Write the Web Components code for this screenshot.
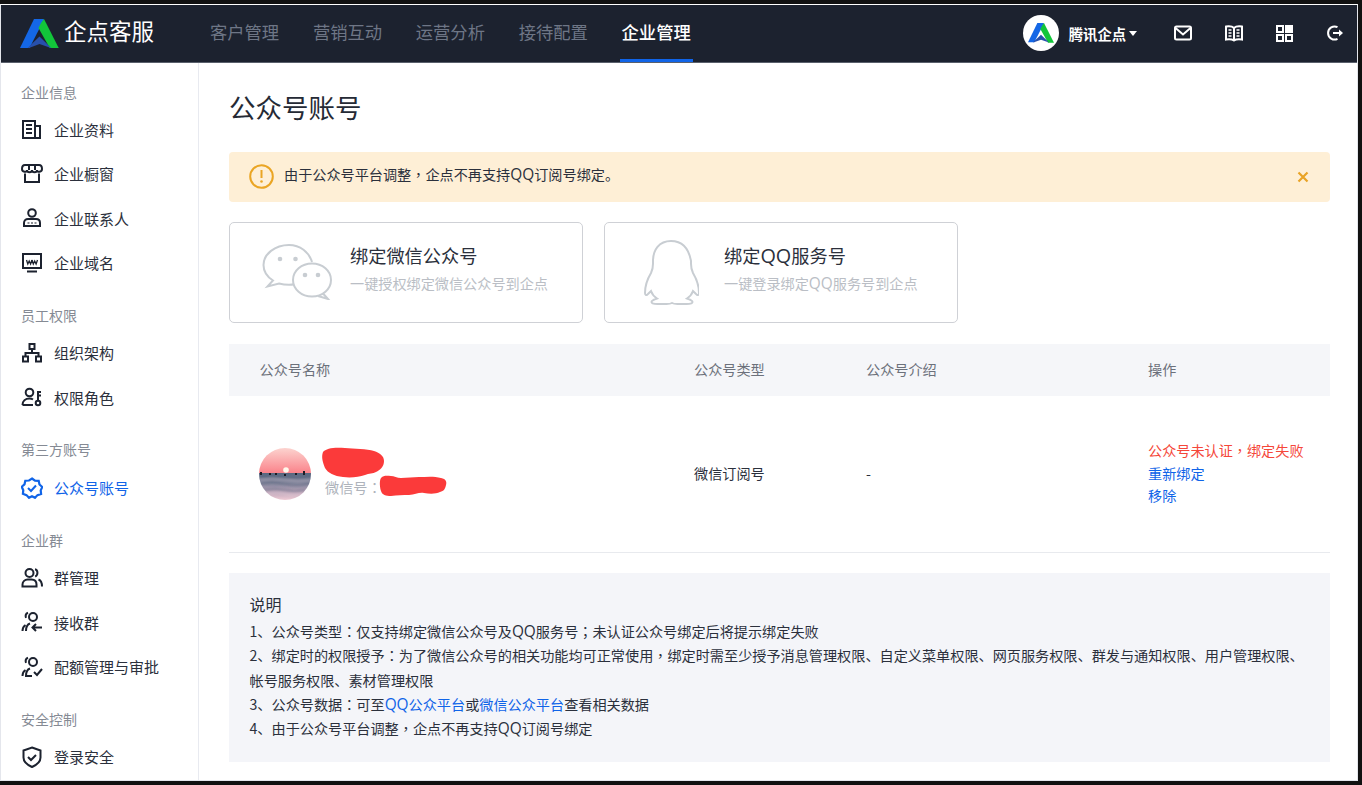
<!DOCTYPE html>
<html lang="zh-CN"><head><meta charset="utf-8"><title>公众号账号</title>
<style>
html,body{margin:0;height:100%;background:#111;overflow:hidden;font-family:"Noto Sans CJK SC","Liberation Sans",sans-serif}
</style></head><body>
<qd-app>
  <qd-topbar slot="top"></qd-topbar>
  <qd-sidebar slot="side">
    <qd-side-group label="企业信息">
      <qd-side-item icon="doc">企业资料</qd-side-item>
      <qd-side-item icon="store">企业橱窗</qd-side-item>
      <qd-side-item icon="contact">企业联系人</qd-side-item>
      <qd-side-item icon="domain">企业域名</qd-side-item>
    </qd-side-group>
    <qd-side-group label="员工权限">
      <qd-side-item icon="org">组织架构</qd-side-item>
      <qd-side-item icon="role">权限角色</qd-side-item>
    </qd-side-group>
    <qd-side-group label="第三方账号">
      <qd-side-item icon="badge" active>公众号账号</qd-side-item>
    </qd-side-group>
    <qd-side-group label="企业群">
      <qd-side-item icon="group">群管理</qd-side-item>
      <qd-side-item icon="receive">接收群</qd-side-item>
      <qd-side-item icon="approve">配额管理与审批</qd-side-item>
    </qd-side-group>
    <qd-side-group label="安全控制">
      <qd-side-item icon="shield">登录安全</qd-side-item>
    </qd-side-group>
  </qd-sidebar>
  <qd-main slot="main">
    <qd-alert class="fx">由于公众号平台调整，企点不再支持QQ订阅号绑定。</qd-alert>
    <qd-bind-row>
      <qd-bind-card kind="wechat" heading="绑定微信公众号" sub="一键授权绑定微信公众号到企点"></qd-bind-card>
      <qd-bind-card kind="qq" heading="绑定QQ服务号" sub="一键登录绑定QQ服务号到企点"></qd-bind-card>
    </qd-bind-row>
    <qd-table></qd-table>
    <qd-note>
      <span slot="title">说明</span>
      <div class="fx">1、公众号类型：仅支持绑定微信公众号及QQ服务号；未认证公众号绑定后将提示绑定失败</div>
      <div class="fx">2、绑定时的权限授予：为了微信公众号的相关功能均可正常使用，绑定时需至少授予消息管理权限、自定义菜单权限、网页服务权限、群发与通知权限、用户管理权限、<br>帐号服务权限、素材管理权限</div>
      <div class="fx">3、公众号数据：可至<a>QQ公众平台</a>或<a>微信公众平台</a>查看相关数据</div>
      <div class="fx">4、由于公众号平台调整，企点不再支持QQ订阅号绑定</div>
    </qd-note>
  </qd-main>
</qd-app>
<script>
const fx=s=>s.replace(/[，：；]/g,m=>`<span lang="zh-TW" style="font-family:'Noto Sans CJK TC',sans-serif">${m}</span>`).replace(/QQ/g,`<span style="font-family:'Open Sans',sans-serif;font-size:1.09em;line-height:1">QQ</span>`);
document.querySelectorAll('.fx').forEach(el=>{el.innerHTML=fx(el.innerHTML)});
document.querySelectorAll('qd-note a').forEach(a=>a.style.color='#1064e8');
const mark=(size)=>`<svg width="${size}" height="${size*29.5/39}" viewBox="0 0 39 29.5" style="display:block;flex:none"><path fill="#1467e6" d="M0 29 14 0h10l-2 4.5L9.500 29H0Z"/><path fill="#12c53a" d="M24 0 39 29.500h-9L18.500 9 21 4l3-4Z"/><path fill="#2750ab" d="M7.500 29 19.500 17.500 31.500 29.200 19.500 25 9 29H7.500Z"/></svg>`;
const I={
doc:'<path d="M2 2h12v17H2zM14 7h5v12h-5"/><path d="M5 6h6M5 10h6M5 14h6"/>',
store:'<path d="M4 2h14c2 0 3 2 3 4 0 3-5 4-5 1 0 3-5 3-5 0 0 3-5 3-5 0 0 3-5 2-5-1 0-2 1-4 3-4Z"/><path d="M8 2v5M14 2v5M4 10.500v8.500h14v-8.500"/>',
contact:'<circle cx="11" cy="6" r="3.800"/><path d="M3 19v-3c0-2.500 2-4 4-4h8c2.500 0 4 1.500 4 4v3H3Z"/><path d="M7.500 15.500v1M11 15.500v1M14.500 15.500v1"/>',
domain:'<path d="M2 2h18v14H2zM6 19.500h10"/><path d="M5.500 8l1.300 4 1.400-3 1.400 3 1.400-4M11 8l1.300 4 1.400-3 1.400 3 1.400-4" stroke-width="1.300"/>',
org:'<path d="M8.500 2h5v5h-5zM2 14.500h5v5H2zM15 14.500h5v5h-5z"/><path d="M11 7v4M4.500 14.500V11h13v3.500"/>',
role:'<circle cx="8.500" cy="6.500" r="3.800"/><path d="M1.500 19c0-4 3-6.500 7-6.500 1.500 0 2.500.3 3.500 1M1.500 19H12"/><circle cx="17" cy="17" r="2.300"/><path d="M17 14.700V6h3M17 9.500h3"/>',
badge:'<path d="M11 1.500l3 2.200 3.700.2.800 3.600 2.800 2.500-1.600 3.400.4 3.600-3.600 1.100-2.500 2.700-3-1.600-3 1.600-2.500-2.700L1.900 16.800 2.300 13.200.7 9.800 3.500 7.300 4.300 3.700 8 3.500Z" stroke-width="2.200"/><path d="M7 11l3 3 5-5.500"/>',
group:'<circle cx="8.500" cy="6" r="4"/><path d="M1.500 19.500v-2c0-3 2.500-5 5-5h4c3 0 5 2 5 5v2h-14Z"/><path d="M14 2.200c2.800.5 3.600 5.500.2 7.500M17.500 12.500c2.500 1 3.500 3 3.500 7"/>',
receive:'<circle cx="12" cy="6" r="4"/><path d="M1.500 20c0-2 0-4 3-6M9 12.500c-3 1-4 4-4 7.500M7 1.800c-2 .8-2.700 3-2 5"/><path d="M21 16.500h-9M15 13l-3.500 3.500L15 20"/>',
approve:'<circle cx="12" cy="6" r="4"/><path d="M1.500 20c0-2 0-4 3-6M9 12.500c-3 1-4 4-4 7.500h6M7 1.800c-2 .8-2.700 3-2 5"/><path d="M13 16l3 3 5-6"/>',
shield:'<path d="M11 1.500 19.500 4.500v7c0 4.500-4 7.500-8.500 9.500-4.500-2-8.500-5-8.500-9.500v-7L11 1.500Z"/><path d="M7 11l3 3 5-5"/>'
};
function def(name,css,html,extra){
  customElements.define(name,class extends HTMLElement{
    connectedCallback(){
      if(this.shadowRoot)return;
      const r=this.attachShadow({mode:'open'});
      r.innerHTML=`<style>${css}</style>`+(typeof html==='function'?html(this):html);
      if(extra)extra(r,this);
    }
  });
}
def('qd-app',`:host{position:fixed;left:0;top:4px;width:1358px;height:777px;box-sizing:border-box;border:1px solid #e4e6ec;border-top-color:#fff;background:#fff;display:flex;flex-direction:column;overflow:hidden}
.b{flex:1;display:flex;min-height:0}`,
`<slot name="top"></slot><div class="b"><slot name="side"></slot><slot name="main"></slot></div>`);

const navNames=['客户管理','营销互动','运营分析','接待配置','企业管理'];
def('qd-topbar',`:host{flex:none;height:56.500px;background:#1c222f;display:flex;align-items:stretch;color:#fff;border-bottom:1px solid #5a606c}
.logo{display:flex;align-items:center;gap:5px;margin-left:19px;width:186px;flex:none}
.logo span{font-size:22.500px;line-height:30px;white-space:nowrap;margin-bottom:6px}
nav{display:flex;gap:29.750px;margin-left:2px}
nav a{display:flex;align-items:center;padding:0 2px;font-size:17.300px;color:#6e7686;box-sizing:border-box;border-bottom:3px solid transparent;white-space:nowrap}
nav a.on{color:#fff;border-bottom-color:#1064e8;font-weight:500}
.r{margin-left:auto;display:flex;align-items:center}
.av{width:36px;height:36px;border-radius:50%;background:#fff;display:flex;align-items:center;justify-content:center;margin-right:10px}
.nm{font-size:14.300px;font-weight:700;white-space:nowrap}
.car{width:0;height:0;border:4.500px solid transparent;border-top:5px solid #fff;border-bottom:0;margin-left:3px;margin-right:37px}
svg.i{display:block;fill:none;stroke:#fff;stroke-width:2}
.r svg.i+svg.i{margin-left:33px}`,
`<div class="logo">${mark(39)}<span>企点客服</span></div>
<nav>${navNames.map((n,i)=>`<a class="${i==4?'on':''}">${n}</a>`).join('')}</nav>
<div class="r"><div class="av">${mark(26)}</div><span class="nm">腾讯企点</span><i class="car"></i>
<svg class="i" width="18" height="18" viewBox="0 0 18 18"><rect x="1" y="2.500" width="16" height="13" rx="1.500"/><path d="M1.500 4 9 10.500 16.500 4"/></svg>
<svg class="i" width="18" height="18" viewBox="0 0 18 18"><path d="M9 4C7.500 2.500 4 2 1 2.500v13C4 15 7.500 15.500 9 16.500c1.500-1 5-1.500 8-1v-13C14 2 10.500 2.500 9 4ZM9 4v12.500"/><path d="M3.500 6h3M3.500 9h3M3.500 12h3M11.500 6h3M11.500 9h3M11.500 12h3" stroke-width="1.300"/></svg>
<svg class="i" width="17" height="17" viewBox="0 0 17 17" style="margin-right:33px"><rect x="1" y="1" width="6" height="6"/><rect x="10" y="0" width="7" height="7" fill="#fff"/><rect x="1" y="10" width="6" height="6"/><rect x="10" y="10" width="6" height="6"/></svg>
<svg class="i" width="18" height="18" viewBox="0 0 18 18" style="margin:0 13px 0 0"><path d="M11.500 3.200A6.500 6.500 0 1 0 11.500 14.800"/><path d="M7 9h8"/><path d="M13 5.500 17 9l-4 3.500Z" fill="#fff" stroke="none"/></svg></div>`);

def('qd-sidebar',`:host{flex:none;width:198px;box-sizing:border-box;border-right:1px solid #e8eaf0;padding-top:14px;overflow:hidden;display:block}`,`<slot></slot>`);
def('qd-side-group',`:host{display:block;margin-bottom:15px}
.l{height:31px;line-height:31px;padding-left:20px;font-size:14px;color:#858a94;white-space:nowrap}`,
h=>`<div class="l">${h.getAttribute('label')}</div><slot></slot>`);
def('qd-side-item',`:host{display:flex;align-items:center;height:44.330px;padding-left:20px;font-size:15px;color:#2b303c;white-space:nowrap}
:host([active]){color:#1064e8}
svg{flex:none;width:22px;height:22px;margin-right:11px;fill:none;stroke:currentColor;stroke-width:2}
:host(:not([active])) svg{color:#1c222f}`,
h=>`<svg viewBox="0 0 22 22">${I[h.getAttribute('icon')]}</svg><slot></slot>`);

def('qd-main',`:host{flex:1;min-width:0;display:block;padding:0 27px 0 30px;color:#2b303c}
h1{margin:0;font-size:26.500px;font-weight:400;line-height:38px;padding-top:25px;height:89px;box-sizing:border-box;color:#252a35}`,
`<h1>公众号账号</h1><slot></slot>`);

def('qd-alert',`:host{display:flex;align-items:center;height:50px;background:#feefd6;border-radius:4px;padding:0 21px 0 20px;font-size:14.150px;color:#2b303c;white-space:nowrap}
svg{flex:none;margin-right:10px}.x{margin:0 0 0 auto}.tx{padding-bottom:5px}`,
`<svg width="25" height="25" viewBox="0 0 25 25"><circle cx="12.500" cy="12.500" r="11.300" fill="none" stroke="#eaa524" stroke-width="2"/><path d="M12.500 6v8" stroke="#eaa524" stroke-width="2"/><circle cx="12.500" cy="17.500" r="1.300" fill="#eaa524"/></svg>
<span class="tx"><slot></slot></span>
<svg class="x" width="12" height="12" viewBox="0 0 12 12"><path d="M1.500 1.500l9 9M10.500 1.500l-9 9" stroke="#e9a326" stroke-width="2.200"/></svg>`);

def('qd-bind-row',`:host{display:flex;gap:21px;margin-top:20.500px}`,`<slot></slot>`);
const cardIcons={
wechat:`<svg width="70" height="56" viewBox="0 0 70 56" fill="none" stroke="#c8cdd2" stroke-width="2"><path d="M27 1C13 1 1.500 10 1.500 21c0 6.500 4 12 9.500 15.500L5.500 42.500l11.500-3c3 .8 6 1.300 10 1.300 2 0 4-.2 5.500-.5"/><path d="M50 18C47 8 38 1 27 1"/><ellipse cx="50" cy="36" rx="19" ry="16.500" fill="#fff"/><path d="M61 49.500 66 55 56 52"/><g fill="#c8cdd2" stroke="none"><circle cx="18" cy="15" r="2.300"/><circle cx="33.500" cy="15" r="2.300"/><circle cx="43" cy="31" r="2.300"/><circle cx="56" cy="31" r="2.300"/></g></svg>`,
qq:`<svg width="56" height="65" viewBox="0 0 56 65" fill="none" stroke="#c8cdd2" stroke-width="2"><path d="M28 1C16 1 10 10 10 21c0 5 .5 7-2 12-3 5-6 13-6 20 0 2 1.500 3 3 1l3-3c1 3 3 5.500 6 7.500-3 1-5.500 2-5.500 3.500 0 2 3 2 6 2h9c3 0 5-.7 5.500-1 .5.300 2.500 1 5.500 1h9c3 0 6 0 6-2 0-1.500-2.500-2.500-5.500-3.500 3-2 5-4.500 6-7.500l3 3c1.500 2 3 1 3-1 0-7-3-15-6-20-2.500-5-2-7-2-12C46 10 40 1 28 1Z"/></svg>`};
def('qd-bind-card',`:host{display:flex;width:354px;height:101px;box-sizing:border-box;border:1px solid #cfd1d6;border-radius:5px;background:#fff;align-items:center;white-space:nowrap}
.ic{flex:none;width:120px;box-sizing:border-box;padding-left:32px;margin-top:-2px}
:host([kind=qq]) .ic{width:119px;padding-left:38px;margin-top:0}
.ic svg{display:block}
.h{font-size:18.200px;line-height:26px;color:#2b303c}
.s{font-size:14.150px;line-height:20px;color:#babec5;margin-top:5px}
.t{margin-top:-11px}`,
h=>`<div class="ic">${cardIcons[h.getAttribute('kind')]}</div><div class="t"><div class="h">${fx(h.getAttribute('heading'))}</div><div class="s">${fx(h.getAttribute('sub'))}</div></div>`);

def('qd-table',`:host{display:block;margin-top:21px;font-size:14.150px;color:#2b303c}
.g{display:grid;grid-template-columns:434.500px 172px 282px 1fr;padding-left:30.500px;align-items:center;box-sizing:border-box}
.hd{height:52px;background:#f5f6f9;color:#6c717b;padding-bottom:2px}
.row{height:157px;padding-bottom:2px;border-bottom:1px solid #e8eaee}
.acc{display:flex;align-items:center;margin-left:-.5px;height:60px;margin-top:2px}
.meta{position:relative;margin-left:14px;align-self:stretch;width:130px;color:#aeb3bb}
.wx{position:absolute;left:0;top:33px;line-height:20px;white-space:nowrap}
.blot{position:absolute;left:-4px;top:0}
.ops div{line-height:22.500px;white-space:nowrap}
.err{color:#f5473a}.lnk{color:#1064e8}`,
`<div class="g hd"><span>公众号名称</span><span>公众号类型</span><span>公众号介绍</span><span>操作</span></div>
<div class="g row"><div class="acc"><svg width="52" height="52" viewBox="0 0 52 52" style="flex:none"><defs><clipPath id="c"><circle cx="26" cy="26" r="26"/></clipPath><linearGradient id="s" x1="0" y1="0" x2="0" y2="1"><stop offset="0" stop-color="#fcd3cf"/><stop offset="1" stop-color="#fa8088"/></linearGradient><linearGradient id="w" x1="0" y1="0" x2="0" y2="1"><stop offset="0" stop-color="#56667f"/><stop offset=".35" stop-color="#7d8299"/><stop offset=".7" stop-color="#b9a4b8"/><stop offset="1" stop-color="#f0ccd6"/></linearGradient><filter id="bl"><feGaussianBlur stdDeviation="1"/></filter></defs><g clip-path="url(#c)"><rect width="52" height="26" fill="url(#s)"/><rect y="25" width="52" height="27" fill="url(#w)"/><circle cx="27" cy="22" r="2.800" fill="#fff8ec"/><g filter="url(#bl)"><path d="M0 29q13-2 26 0t26-1M0 36q13-3 26 0t26-1M4 42q13-2 22 0t20 0" stroke="#46566f" stroke-width="1" fill="none" opacity=".6"/><path d="M0 32q13-2 26 0t26 0M6 46q13-2 20 0t20 0" stroke="#f3dbe2" stroke-width="1" fill="none" opacity=".6"/></g><path d="M1 24h2v3H1zM10 25h2v2h-2zM44 23h2v4h-2zM25 26h2v2h-2zM16 25h2v2h-2zM36 25h2v2h-2z" fill="#1c1c24"/></g></svg>
<div class="meta"><span class="wx">微信号<span lang="zh-TW" style="font-family:'Noto Sans CJK TC',sans-serif">：</span></span>
<svg class="blot" width="135" height="62" viewBox="0 0 135 62" style="overflow:visible"><path fill="#fb3a3a" d="M2 8C5 4 14 3 24 4c9 .5 22 1 29 3 6 2 10 5 10 10 0 6-4 9-8 11-3 2-7 1-11 3-6 2-14 3-22 2C13 32 7 29 4 24 2 19 0 13 2 8Z"/><path fill="#fb3a3a" d="M60 34c3-3 6-2 10-2 3 0 6 2 10 2 6 0 12-1 18-1 7 0 15-1 22 1 5 1 6 4 5 7-1 4-2 6-6 7-4 2-10 2-16 1-5-1-9 2-15 2-6 0-12 0-18 1-5 0-9-1-10-5-1-3-2-10 0-13Z"/></svg></div></div>
<span>微信订阅号</span><span>-</span>
<div class="ops"><div class="err">${fx('公众号未认证，绑定失败')}</div><div class="lnk">重新绑定</div><div class="lnk">移除</div></div></div>`);

def('qd-note',`:host{display:block;margin-top:20px;background:#f4f5f9;height:189px;box-sizing:border-box;padding:19px 25px 20px 20.500px;font-size:14.150px;line-height:24.300px;color:#2b303c}
.t{font-size:16px;line-height:24px;margin-bottom:3px}`,
`<div class="t"><slot name="title"></slot></div><slot></slot>`);
</script>
</body></html>
